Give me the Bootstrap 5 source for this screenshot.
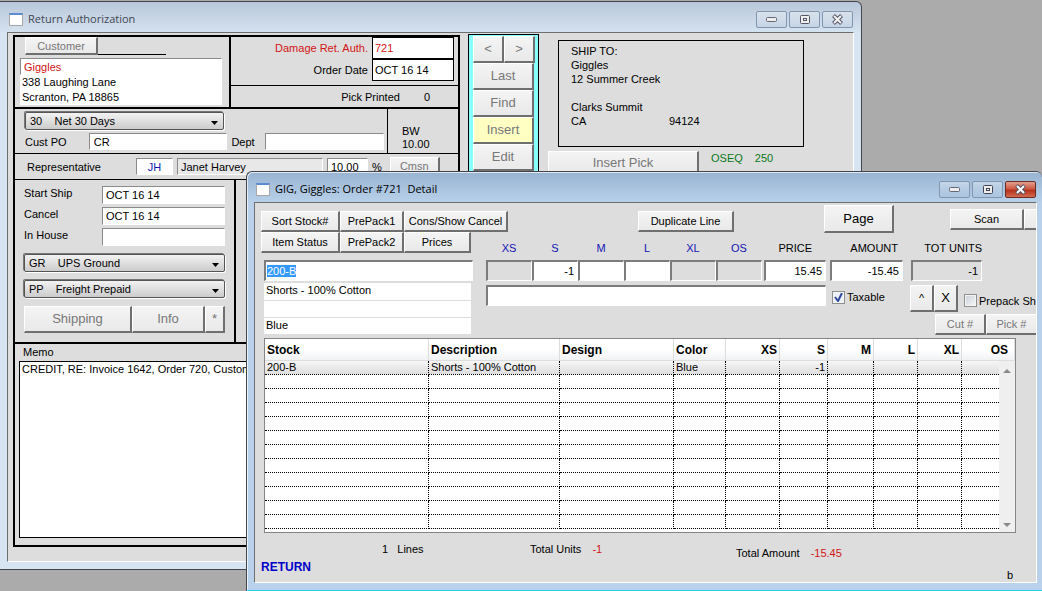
<!DOCTYPE html>
<html lang="en">
<head>
<meta charset="utf-8">
<meta name="viewport" content="width=device-width, initial-scale=1">
<title>Return Authorization</title>
<link href="https://cdn.jsdelivr.net/npm/bootstrap@5.3.0/dist/css/bootstrap.min.css" rel="stylesheet">
<style>
  body { background: #ababab; font: 11px/14px "Liberation Sans", Arial, sans-serif; color: #000; overflow: hidden; }
  .desktop { min-height: 100vh; }
  input, select, textarea { font: inherit; color: #000; border-radius: 0; min-width: 0; }

  /* windows */
  .win { position: absolute; display: flex; flex-direction: column; border: 1px solid #45454d; }
  .win-back { left: 0; right: 180px; top: 1px; height: 569px; background: linear-gradient(#b8c7da, #d7e4f1 32px); border-left: 0; border-radius: 0 6px 0 0; padding: 0 7px 7px 7px; }
  .win-front { left: 246px; right: 0; top: 171px; bottom: 0; min-height: 420px; background: linear-gradient(#98b4d2, #b9d1ea 31px); border-width: 1px 0 1px 1px; border-bottom-color: #22d3ee; border-radius: 6px 6px 0 0; box-shadow: inset 1px 1px #ffffffb0; padding: 0 5px 7px 7px; }
  .bar { height: 30px; padding: 4px 1px 0 2px; font: 11px/16px "Open Sans", sans-serif; }
  .win-back .bar { color: #3f4652; }
  .bar-icon { width: 14px; height: 13px; background: #fff; border: 1px solid #a8a8a8; border-top: 2px solid #5b8bd0; margin-right: 5px; }
  .ctl { width: 31px; height: 17px; padding: 0; border: 1px solid #8296b0; border-radius: 2px; background: linear-gradient(#ffffff60, #ffffff20 50%, #8fa8c830); display: flex; align-items: center; justify-content: center; }
  .ctls { display: flex; gap: 2px; }
  .ctl-close { background: linear-gradient(#e2a08f, #cf5a43 45%, #b5321a 55%, #d26a50); border-color: #6b2a22; }
  .client { flex: 1; min-height: 0; background: #ddd; border: 1px solid #6e6e6e; border-right-color: #fff; border-bottom-color: #fff; overflow: hidden; }

  /* controls */
  .key { flex-shrink: 0; font-family: "Liberation Sans", Arial, sans-serif; font-size: 13px; line-height: 14px; padding: 0; background: linear-gradient(#f4f4f4, #e9e9e9); border: 1px solid #fff; border-right: 2px solid #6f6f6f; border-bottom: 2px solid #6f6f6f; border-radius: 0; color: #000; }
  .key-off { color: #777; }
  .key-sm { font-size: 11px; }
  .sunk { background: #fff; border: 1px solid #8a8a8a; border-right-color: #fff; border-bottom-color: #fff; padding: 0 3px; height: 17px; }
  .deep { background: #fff; border: 2px solid #7c7c7c; border-right: 1px solid #fff; border-bottom: 1px solid #fff; padding: 0 3px; height: 21px; }
  .deep.shade { background: #ddd; }
  .drop { appearance: none; display: block; height: 18px; padding: 0 4px; border: 1px solid #555; border-radius: 2px; box-shadow: -1px -1px #777, 1px 1px #fff; white-space: pre;
    background: url("data:image/svg+xml,%3Csvg xmlns='http://www.w3.org/2000/svg' width='7' height='4'%3E%3Cpath d='M0 0h7L3.500 4z'/%3E%3C/svg%3E") no-repeat right 5px top 8px, linear-gradient(#f2f2f2, #ccc); }

  /* order form */
  .frame { width: 447px; border: 2px solid #000; margin: 2px 0 0 5px; height: 512px; }
  .rule-b { border-bottom: 1px solid #000; }
  .rule-b2 { border-bottom: 2px solid #000; }
  .rule-r { border-right: 1px solid #000; }
  .rule-r2 { border-right: 2px solid #000; }
  .cust { width: 216px; padding: 0 7px 2px 5px; }
  .cust-tab { margin-left: 5px; width: 73px; height: 18px; }
  .cust-line { width: 68px; border-bottom: 1px solid #000; }
  .cust-name { margin-top: 3px; }
  .cust-addr { background: #fff; line-height: 15px; padding-left: 2px; }
  .box { background: #fff; border: 1px solid #000; height: 22px; width: 82px; padding: 0 2px; }
  .terms { width: 373px; height: 44px; padding: 3px 3px 0 10px; }
  .dates { width: 221px; height: 162px; padding: 6px 9px 0 9px; }
  .dates .sunk { width: 123px; height: 18px; }
  .dates .gap { margin-bottom: 3px; }
  .dates .drop { width: 100%; margin: 8px 0; }
  .memo { display: block; width: 100%; height: 177px; resize: none; border: 1px solid #000; padding: 0 2px; white-space: pre; overflow: hidden; }
  .side { width: 71px; margin: 1px 0 0 8px; border: 1px solid #000; height: 200px; background: #8ff; padding: 1px 4px; }
  .side .key { height: 27px; width: 61px; display: block; }
  .side .key.half { width: 31px; }
  .side .key.hot { background: #ffffc4; }
  .ship { width: 246px; height: 107px; border: 1px solid #000; margin-left: 10px; padding: 3px 12px; }
  .green { color: #0a7a1a; }
  .red { color: #d21414; }
  .navy { color: #1414b4; }

  /* detail form */
  .lcol { width: 231px; padding: 8px 0 0 6px; }
  .lcol .key, .rcol .key { height: 21px; }
  .lcol .key.wide { width: 79px; }
  .lcol .key.mid { width: 64px; }
  .item { width: 209px; margin: 7px 0 2px 3px; padding-left: 1px; }
  .item::selection { background: #3399ff; color: #fff; }
  .attrs { width: 207px; margin-left: 3px; background: #fff; }
  .attrs > div { height: 17px; line-height: 15px; padding-left: 2px; }
  .attrs > div + div { border-top: 1px solid #ddd; }
  .rcol { flex: 1; min-width: 0; padding-top: 2px; }
  .rcol .key.page { width: 70px; height: 28px; }
  .size { width: 46px; flex-shrink: 0; }
  .rcol .key.tall { width: 24px; height: 27px; }
  .tick { appearance: none; width: 13px; height: 13px; margin: 0 2px 0 0; border: 1px solid #8e8f8f; background: #fff linear-gradient(135deg, #ccd2da, #f6f6f6); box-shadow: inset 0 0 0 1px #f4f4f4; }
  .tick:checked { background: url("data:image/svg+xml,%3Csvg xmlns='http://www.w3.org/2000/svg' width='11' height='11'%3E%3Cpath d='M2 5l3 4 4-8' fill='none' stroke='%23334a9c' stroke-width='2'/%3E%3C/svg%3E") center no-repeat, #eef1f8; }
  .lines { position: relative; margin: 3px 20px 0 9px; border: 1px solid #868686; height: 195px; background: #fff; overflow: hidden; flex-shrink: 0; }
  .lines table { table-layout: fixed; width: 100%; border-collapse: separate; border-spacing: 0; }
  .lines th { height: 22px; font-size: 12px; padding: 0 2px; border-right: 1px solid #ddd; border-bottom: 1px solid #ddd; background: linear-gradient(#fff 50%, #f1f2f4); white-space: nowrap; }
  .lines th:last-child { padding-right: 6px; }
  .lines td { height: 14px; line-height: 13px; padding: 0 2px; border-right: 1px dotted #000; border-bottom: 1px dotted #000; white-space: nowrap; }
  .lines td:last-child { border-right: 0; }
  .lines .picked td { background: linear-gradient(#f6f6f6, #dedede); }
  .lines .n { text-align: right; }
  .scroll { position: absolute; right: 0; top: 22px; bottom: 0; width: 16px; background: #efefef; padding: 8px 4px 5px; }
  .back { color: #0000c8; font-size: 12px; font-weight: bold; text-decoration: none; }
</style>
</head>
<body>
<div class="desktop position-relative">

  <section class="win win-back" aria-label="Return Authorization">
    <header class="bar d-flex align-items-center">
      <span class="bar-icon"></span><span class="me-auto">Return Authorization</span>
      <div class="ctls">
        <button class="ctl" aria-label="Minimize"><svg width="13" height="7"><rect x="1.500" y="1.500" width="10" height="4" rx="1" fill="#eee" stroke="#667"/></svg></button>
        <button class="ctl" aria-label="Restore"><svg width="12" height="11"><rect x="1.500" y="1.500" width="9" height="8" rx="1" fill="#eee" stroke="#556"/><rect x="4.500" y="4.500" width="3" height="2" fill="none" stroke="#556"/></svg></button>
        <button class="ctl" aria-label="Close"><svg width="13" height="11"><path d="M2.500 1.500l8 8m0-8l-8 8" stroke="#556" stroke-width="4"/><path d="M3 2l7 7m0-7l-7 7" stroke="#f4f4f4" stroke-width="2"/></svg></button>
      </div>
    </header>
    <div class="client d-flex align-items-start">
      <form class="frame flex-shrink-0">
        <div class="d-flex rule-b2">
          <div class="cust rule-r2 flex-shrink-0">
            <div class="d-flex"><button type="button" class="key key-off key-sm cust-tab">Customer</button><span class="cust-line"></span></div>
            <input class="sunk red w-100 d-block cust-name" aria-label="Customer" value="Giggles">
            <div class="cust-addr">338 Laughing Lane<br>Scranton, PA 18865</div>
          </div>
          <div class="flex-fill">
            <div class="rule-b" style="height:49px">
              <div class="d-flex justify-content-end align-items-center pe-1"><label class="red me-1" for="auth">Damage Ret. Auth.</label><input id="auth" class="box red" value="721"></div>
              <div class="d-flex justify-content-end align-items-center pe-1"><label class="me-1" for="od">Order Date</label><input id="od" class="box" value="OCT 16 14"></div>
            </div>
            <div class="d-flex justify-content-end align-items-center" style="height:21px;padding-right:28px"><span>Pick Printed</span><span class="ms-4">0</span></div>
          </div>
        </div>
        <div class="d-flex rule-b">
          <div class="terms rule-r flex-shrink-0">
            <select class="drop" style="width:199px;margin-bottom:3px" aria-label="Terms"><option>30 &nbsp;&nbsp; Net 30 Days</option></select>
            <div class="d-flex align-items-center"><label for="po" style="width:64px">Cust PO</label><input id="po" class="sunk px-1" style="width:139px" value="CR"><label for="dept" class="mx-1" style="width:30px">Dept</label><input id="dept" class="sunk" style="width:119px"></div>
          </div>
          <div style="padding:16px 0 0 14px;line-height:13px">BW<br>10.00</div>
        </div>
        <div class="d-flex align-items-center rule-b" style="height:26px;padding-left:12px">
          <label for="rep" style="width:109px">Representative</label>
          <input id="rep" class="sunk navy text-center" style="width:37px" value="JH">
          <input class="sunk ms-1" style="width:146px;background:#e8e8e8" aria-label="Name" value="Janet Harvey">
          <input class="sunk" style="width:41px;margin-left:4px" aria-label="Commission" value="10.00">
          <span class="mx-1">%</span>
          <button type="button" class="key key-off key-sm ms-1" style="width:50px;height:19px">Cmsn</button>
        </div>
        <div class="d-flex rule-b2">
          <div class="dates rule-r2">
            <div class="d-flex gap"><label class="me-auto" for="ss">Start Ship</label><input id="ss" class="sunk" value="OCT 16 14"></div>
            <div class="d-flex gap"><label class="me-auto" for="cn">Cancel</label><input id="cn" class="sunk" value="OCT 16 14"></div>
            <div class="d-flex"><label class="me-auto" for="ih">In House</label><input id="ih" class="sunk"></div>
            <select class="drop" aria-label="Carrier"><option>GR &nbsp;&nbsp; UPS Ground</option></select>
            <select class="drop" aria-label="Freight"><option>PP &nbsp;&nbsp; Freight Prepaid</option></select>
            <div class="d-flex"><button type="button" class="key key-off" style="width:108px;height:27px">Shipping</button><button type="button" class="key key-off" style="width:73px">Info</button><button type="button" class="key key-off flex-fill">*</button></div>
          </div>
        </div>
        <div class="px-1"><label for="memo" class="px-1" style="line-height:17px">Memo</label>
          <textarea id="memo" class="memo">CREDIT, RE: Invoice 1642, Order 720, Custom</textarea></div>
      </form>
      <nav class="side flex-shrink-0">
        <div class="d-flex"><button class="key key-off half">&lt;</button><button class="key key-off half">&gt;</button></div>
        <button class="key key-off">Last</button><button class="key key-off">Find</button><button class="key key-off hot">Insert</button><button class="key key-off">Edit</button>
      </nav>
      <div style="padding:7px 0 0 9px">
        <address class="ship mb-1">SHIP TO:<br>Giggles<br>12 Summer Creek<br><br>Clarks Summit<br><span class="d-inline-block" style="width:98px">CA</span>94124</address>
        <div class="d-flex"><button class="key key-off" style="width:151px;height:25px">Insert Pick</button><span class="green ms-2 ps-1">OSEQ</span><span class="green ms-2 ps-1">250</span></div>
      </div>
    </div>
  </section>

  <section class="win win-front" aria-label="Order Detail">
    <header class="bar d-flex align-items-center">
      <span class="bar-icon"></span><span class="me-auto" style="white-space:pre">GIG, Giggles: Order #721  Detail</span>
      <div class="ctls">
        <button class="ctl" aria-label="Minimize"><svg width="13" height="7"><rect x="1.500" y="1.500" width="10" height="4" rx="1" fill="#eee" stroke="#667"/></svg></button>
        <button class="ctl" aria-label="Restore"><svg width="12" height="11"><rect x="1.500" y="1.500" width="9" height="8" rx="1" fill="#eee" stroke="#445"/><rect x="4.500" y="4.500" width="3" height="2" fill="none" stroke="#445"/></svg></button>
        <button class="ctl ctl-close" aria-label="Close"><svg width="13" height="11"><path d="M2.500 1.500l8 8m0-8l-8 8" stroke="#556" stroke-width="4"/><path d="M3 2l7 7m0-7l-7 7" stroke="#fff" stroke-width="2"/></svg></button>
      </div>
    </header>
    <div class="client d-flex flex-column">
      <div class="d-flex">
        <div class="lcol flex-shrink-0">
          <div class="d-flex"><button class="key key-sm wide">Sort Stock#</button><button class="key key-sm mid">PrePack1</button><button class="key key-sm" style="width:104px">Cons/Show Cancel</button></div>
          <div class="d-flex"><button class="key key-sm wide">Item Status</button><button class="key key-sm mid">PrePack2</button><button class="key key-sm" style="width:67px">Prices</button></div>
          <input id="item" class="deep item d-block" aria-label="Stock number" value="200-B">
          <div class="attrs"><div>Shorts - 100% Cotton</div><div></div><div>Blue</div></div>
        </div>
        <div class="rcol">
          <div class="d-flex align-items-center">
            <button class="key key-sm mt-1" style="width:96px;margin-left:152px">Duplicate Line</button>
            <button class="key page" style="margin-left:90px">Page</button>
            <button class="key key-sm" style="width:74px;margin-left:56px">Scan</button><button class="key" style="width:40px" aria-label="More"></button>
          </div>
          <div class="d-flex text-center navy" style="padding-top:8px;height:27px">
            <span class="size">XS</span><span class="size">S</span><span class="size">M</span><span class="size">L</span><span class="size">XL</span><span class="size">OS</span>
            <span class="text-black text-end" style="width:50px">PRICE</span><span class="text-black text-end" style="width:86px">AMOUNT</span><span class="text-black text-end" style="width:84px">TOT UNITS</span>
          </div>
          <div class="d-flex text-end">
            <input class="deep shade size" aria-label="XS"><input class="deep size text-end" aria-label="S" value="-1"><input class="deep size" aria-label="M"><input class="deep size" aria-label="L"><input class="deep shade size" aria-label="XL"><input class="deep shade size" aria-label="OS">
            <input class="deep text-end" style="width:62px;margin-left:2px" aria-label="Price" value="15.45"><input class="deep text-end" style="width:73px;margin-left:4px" aria-label="Amount" value="-15.45"><input class="deep shade text-end" style="width:71px;margin-left:8px" aria-label="Total units" value="-1">
          </div>
          <div class="d-flex" style="padding-top:4px">
            <input class="deep flex-shrink-0" style="width:340px" aria-label="Note">
            <label class="d-flex align-items-center flex-shrink-0" style="width:84px;padding-left:6px;height:24px"><input type="checkbox" class="tick" checked>Taxable</label>
            <button class="key key-sm tall">^</button><button class="key tall">X</button>
            <label class="d-flex align-items-center flex-shrink-0 text-nowrap mt-1" style="margin-left:6px"><input type="checkbox" class="tick">Prepack Sh</label>
          </div>
          <div class="d-flex" style="padding:2px 0 0 449px"><button class="key key-sm key-off" style="width:51px">Cut #</button><button class="key key-sm key-off" style="width:52px">Pick #</button></div>
        </div>
      </div>
      <div class="lines">
        <table>
          <colgroup><col style="width:164px"><col style="width:131px"><col style="width:114px"><col style="width:52px"><col style="width:54px"><col style="width:48px"><col style="width:46px"><col style="width:44px"><col style="width:44px"><col></colgroup>
          <thead><tr><th>Stock</th><th>Description</th><th>Design</th><th>Color</th><th class="n">XS</th><th class="n">S</th><th class="n">M</th><th class="n">L</th><th class="n">XL</th><th class="n">OS</th></tr></thead>
          <tbody id="rows"><tr class="picked"><td>200-B</td><td>Shorts - 100% Cotton</td><td></td><td>Blue</td><td></td><td class="n">-1</td><td></td><td></td><td></td><td></td></tr></tbody>
        </table>
        <div class="scroll d-flex flex-column justify-content-between"><svg width="8" height="4"><path d="M0 4h8L4 0z" fill="#888"/></svg><svg width="8" height="4"><path d="M0 0h8L4 4z" fill="#888"/></svg></div>
      </div>
      <div class="d-flex" style="padding:9px 0 0 127px"><span style="width:148px;white-space:pre">1   Lines</span><span style="width:206px">Total Units <span class="red ms-2">-1</span></span><span class="mt-1">Total Amount <span class="red ms-2">-15.45</span></span></div>
      <div class="d-flex justify-content-between" style="padding:0 23px 0 6px"><a href="#" class="back">RETURN</a><span class="mt-2">b</span></div>
    </div>
  </section>
</div>
<script src="https://cdn.jsdelivr.net/npm/bootstrap@5.3.0/dist/js/bootstrap.bundle.min.js"></script>
<script>
  // empty order lines below the first one
  const rows = document.getElementById('rows');
  for (let i = 0; i < 11; i++) {
    const tr = rows.insertRow();
    for (let c = 0; c < 10; c++) tr.insertCell();
  }
  const item = document.getElementById('item');
  item.style.outline = 'none';
  item.focus();
  item.select();
</script>
</body>
</html>
